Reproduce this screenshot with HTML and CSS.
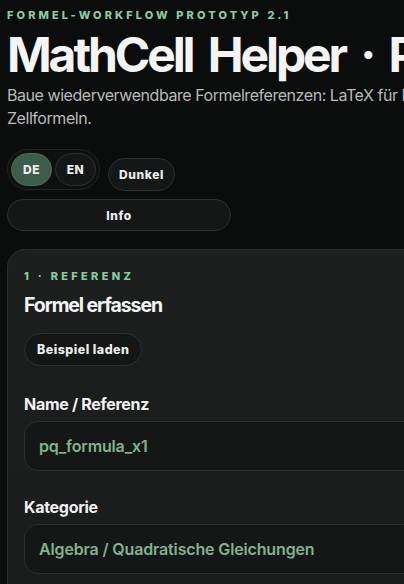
FILE: index.html
```html
<!DOCTYPE html>
<html lang="de">
<head>
<meta charset="utf-8">
<title>MathCell Helper · Prototyp</title>
<link rel="stylesheet" href="styles.css">
</head>
<body>
<main class="page">
  <header class="hero">
    <p class="eyebrow">Formel-Workflow Prototyp 2.1</p>
    <h1 class="title">MathCell Helper · Prototyp</h1>
    <p class="lead">Baue wiederverwendbare Formelreferenzen: LaTeX für Dokumente, Excel für Zellformeln.</p>
    <div class="actions">
      <div class="actions-row">
        <div class="lang-switch" role="group" aria-label="Sprache">
          <button class="pill pill-round is-active" type="button">DE</button>
          <button class="pill pill-round" type="button">EN</button>
        </div>
        <button class="pill theme-btn" type="button">Dunkel</button>
      </div>
      <button class="pill info-btn" type="button">Info</button>
    </div>
  </header>

  <section class="card">
    <p class="eyebrow card-eyebrow">1 · Referenz</p>
    <h2 class="card-title">Formel erfassen</h2>
    <button class="pill sample-btn" type="button">Beispiel laden</button>

    <label class="field">
      <span class="field-label">Name / Referenz</span>
      <input class="field-input" type="text" value="pq_formula_x1">
    </label>

    <label class="field">
      <span class="field-label">Kategorie</span>
      <input class="field-input" type="text" value="Algebra / Quadratische Gleichungen">
    </label>
  </section>
</main>
</body>
</html>
```

FILE: styles.css
```css
html {
  overflow-x: hidden;
  scrollbar-width: none;
  background: #0b0c0c;
}

body {
  margin: 0;
  background: #0b0c0c;
  color: #f1f2f1;
  font-family: Inter, "Noto Sans", "Liberation Sans", sans-serif;
}

.page {
  width: 620px;
  padding: 7px 7px 40px;
}

.hero {
  display: flex;
  flex-direction: column;
}

.eyebrow {
  margin: 0;
  font-size: 11px;
  line-height: 16px;
  font-weight: 800;
  letter-spacing: 3.1px;
  text-transform: uppercase;
  color: #86cda5;
}

.title {
  margin: 7px 0 0;
  font-size: 48px;
  line-height: 50px;
  font-weight: 700;
  letter-spacing: -3.1px;
  word-spacing: 7px;
  white-space: nowrap;
  color: #f3f4f3;
}

.lead {
  margin: 4px 0 0;
  font-size: 16px;
  line-height: 23px;
  letter-spacing: -0.45px;
  color: #b9bbba;
}

.actions {
  display: flex;
  flex-direction: column;
  align-items: flex-start;
  gap: 9px;
  margin-top: 19px;
}

.actions-row {
  display: flex;
  align-items: flex-end;
  gap: 8px;
}

.lang-switch {
  display: flex;
  gap: 3px;
  padding: 3px;
  border: 1px solid #232525;
  border-radius: 999px;
  background: #0f1010;
}

.pill {
  font-family: inherit;
  font-size: 12px;
  font-weight: 800;
  letter-spacing: 0.6px;
  color: #eceeed;
  background: #151716;
  border: 1px solid #2e3131;
  border-radius: 999px;
  cursor: pointer;
}

.pill-round {
  width: 41px;
  height: 33px;
  padding: 0;
}

.pill-round.is-active {
  background: #3d5c4c;
  border-color: #4a6b5a;
}

.theme-btn {
  width: 67px;
  height: 33px;
  padding: 0;
  margin-bottom: -1px;
}

.info-btn {
  width: 224px;
  height: 32px;
  padding: 0;
}

.card {
  margin-top: 18px;
  padding: 18px 16px 30px;
  border: 1px solid #2f3131;
  border-radius: 18px;
  background: linear-gradient(180deg, #1d1e1e 0%, #1b1c1c 100%);
}

.card-eyebrow {
  font-size: 11px;
  letter-spacing: 3.3px;
}

.card-title {
  margin: 8px 0 0;
  font-size: 19.5px;
  line-height: 26px;
  font-weight: 700;
  letter-spacing: -1.1px;
  color: #f3f4f3;
}

.sample-btn {
  display: block;
  margin-top: 15px;
  height: 33px;
  padding: 0 12px;
  font-size: 12.5px;
  letter-spacing: 0.45px;
}

.field {
  display: flex;
  flex-direction: column;
  gap: 7px;
  margin-top: 28px;
}

.field + .field {
  margin-top: 26px;
}

.field-label {
  font-size: 16px;
  line-height: 20px;
  font-weight: 700;
  letter-spacing: -0.3px;
  color: #f1f2f1;
}

.field-input {
  box-sizing: border-box;
  width: 100%;
  height: 50px;
  padding: 0 14px;
  border: 1px solid #2c2f2e;
  border-radius: 14px;
  background: #151716;
  font-family: inherit;
  font-size: 16px;
  font-weight: 600;
  letter-spacing: -0.15px;
  color: #7fb392;
  outline: none;
}
```
